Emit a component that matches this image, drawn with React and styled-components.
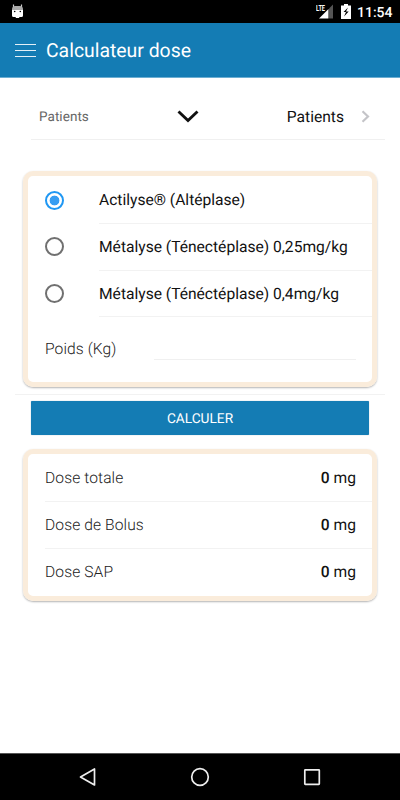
import styled, { createGlobalStyle } from "styled-components";
import { useState } from "react";

const GlobalStyle = createGlobalStyle`
  * {
    box-sizing: border-box;
  }
  body {
    margin: 0;
    background-color: #fff;
    font-family: Roboto, "Noto Sans", sans-serif;
    text-rendering: geometricPrecision;
    color: #111;
  }
  button, input {
    font-family: inherit;
    text-rendering: inherit;
    border: none;
    padding: 0;
    background: none;
    outline: none;
  }
`;

const Screen = styled.div`
  width: 400px;
  height: 800px;
  display: flex;
  flex-direction: column;
  overflow: hidden;
`;
const StatusBar = styled.div`
  height: 23px;
  padding: 0 8px 0 11px;
  display: flex;
  align-items: center;
  background-color: #000;
  color: #fff;
  svg {
    display: block;
  }
`;
const StatusIcons = styled.div`
  margin-left: auto;
  display: flex;
  align-items: center;
  gap: 7px;
`;
const Clock = styled.span`
  width: 35px;
  margin-left: -1px;
  font-size: 14px;
  font-weight: 500;
  line-height: 21px;
  padding-top: 3px;
  white-space: nowrap;
`;
const Header = styled.header`
  height: 55px;
  padding-left: 15px;
  display: flex;
  align-items: center;
  background-color: #147cb4;
  border-bottom: 1px solid #6caed2;
  color: #fff;
`;
const MenuButton = styled.button`
  width: 21px;
  height: 13px;
  display: flex;
  flex-direction: column;
  justify-content: space-between;
  span {
    height: 1px;
    background-color: #e4f0f7;
  }
`;
const Title = styled.h1`
  margin: 2px 0 0 10px;
  font-size: 19.4px;
  font-weight: 400;
  line-height: 24px;
`;
const Content = styled.main`
  flex: 1;
  display: flex;
  flex-direction: column;
`;
const PatientRow = styled.div`
  height: 46px;
  margin: 16px 15px 31px 31px;
  padding: 0 15px 0 8px;
  display: flex;
  align-items: center;
  border-bottom: 1px solid #f0f0f0;
  svg {
    display: block;
  }
`;
const SmallLabel = styled.span`
  width: 138px;
  font-size: 13.5px;
  line-height: 16px;
  letter-spacing: 0.05px;
  color: #666;
`;
const PatientLink = styled.span`
  margin-left: auto;
  margin-right: 17px;
  font-size: 15.6px;
`;
const Card = styled.section`
  height: ${({ $height }) => $height}px;
  margin: 0 23px;
  border: 5px solid #faecdb;
  border-radius: 10px;
  box-shadow: 0 1px 2px rgba(0, 0, 0, 0.3);
  padding-left: 17px;
`;
const RadioRow = styled.label`
  height: ${({ $height }) => $height}px;
  display: flex;
  align-items: center;
  input {
    appearance: none;
    flex: none;
    width: 19px;
    height: 19px;
    margin: 0 35px 0 0;
    border: 2px solid #707070;
    border-radius: 50%;
  }
  &:not(:first-child) input {
    margin-bottom: 2px;
  }
  input:checked {
    border-color: #1f97f3;
    background: radial-gradient(circle, #379df2 4.6px, transparent 5.2px);
  }
`;
const RadioText = styled.span`
  flex: 1;
  height: 100%;
  display: flex;
  align-items: center;
  border-bottom: 1px solid #f2f2f2;
  font-size: 15.6px;
  line-height: 20px;
  white-space: nowrap;
`;
const WeightRow = styled.label`
  height: 43px;
  display: flex;
  align-items: flex-end;
  justify-content: space-between;
  padding-right: 16px;
`;
const Label = styled.span`
  font-size: 15.6px;
  font-weight: 300;
  letter-spacing: 0.1px;
  line-height: 22px;
  color: #222;
`;
const WeightInput = styled.input`
  width: 202px;
  height: 30px;
  border-bottom: 1px solid #f0f0f0;
  font-size: 15.6px;
`;
const Separator = styled.div`
  height: 1px;
  margin: 7px 15px 6px;
  background-color: #f2f2f2;
`;
const CalculateButton = styled.button`
  height: 34px;
  margin: 0 31px 14px;
  padding-top: 1px;
  border-radius: 1px;
  background-color: #147cb4;
  box-shadow: 0 0 1px rgba(0, 60, 110, 0.5);
  color: #fff;
  font-size: 13.7px;
`;
const DoseRow = styled.div`
  height: ${({ $height }) => $height}px;
  padding: 1px 16px 0 0;
  display: flex;
  align-items: center;
  justify-content: space-between;
  border-bottom: 1px solid #f2f2f2;
  &:nth-child(2) {
    padding-top: 0;
  }
  &:last-child {
    border-bottom: none;
  }
`;
const Dose = styled.span`
  font-size: 15.6px;
  line-height: 22px;
  b {
    font-weight: 500;
  }
`;
const NavBar = styled.nav`
  height: 47px;
  display: flex;
  align-items: center;
  justify-content: space-between;
  padding: 0 78px;
  border-top: 1px solid #555;
  background-color: #000;
  svg {
    display: block;
  }
`;

const treatments = [
  { name: "Actilyse® (Altéplase)", height: 48 },
  { name: "Métalyse (Ténectéplase) 0,25mg/kg", height: 47 },
  { name: "Métalyse (Ténéctéplase) 0,4mg/kg", height: 46 },
];
const doses = [
  { name: "Dose totale", height: 48 },
  { name: "Dose de Bolus", height: 47 },
  { name: "Dose SAP", height: 45 },
];

export default function App() {
  const [selected, setSelected] = useState(0);
  const [weight, setWeight] = useState("");

  return (
    <Screen>
      <GlobalStyle />
      <StatusBar>
        <svg width="13" height="15" viewBox="0 0 13 15">
          <path d="M2.500 .5v3M10.500 .5v3" stroke="#ccc" strokeWidth="1.200" />
          <path d="M1 5.500Q1 2 4 2h5q3 0 3 3.500z" fill="#aaa" />
          <path d="M1 5.500h11v6q0 1.500-1.500 1.500H8.500l-.5 1H5l-.5-1h-2Q1 13 1 11.500z" fill="#fff" />
          <circle cx="3.700" cy="7.500" r=".8" />
          <circle cx="9.300" cy="7.500" r=".8" />
        </svg>
        <StatusIcons>
          <svg width="18" height="15" viewBox="0 0 18 15">
            <path d="M13 4.500l4-4V14.500h-4z" fill="#555" />
            <path d="M3 14.500L12.500 5v9.500z" fill="#fff" />
            <text x="0" y="7" fill="#fff" fontSize="8.500" fontWeight="700" textLength="9" lengthAdjust="spacingAndGlyphs">
              LTE
            </text>
          </svg>
          <svg width="10" height="15" viewBox="0 0 10 15">
            <path d="M3 0h4v1.500h3V15H0V1.500h3z" fill="#fff" />
            <path d="M7 3.500L2.500 8H5l-2 4.500L7.700 7.500H5z" fill="#000" />
          </svg>
          <Clock>11:54</Clock>
        </StatusIcons>
      </StatusBar>
      <Header>
        <MenuButton aria-label="Menu">
          <span />
          <span />
          <span />
        </MenuButton>
        <Title>Calculateur dose</Title>
      </Header>
      <Content>
        <PatientRow>
          <SmallLabel>Patients</SmallLabel>
          <svg width="22" height="13" viewBox="0 0 22 13">
            <path d="M1.500 1.500L11 10.500 20.500 1.500" fill="none" stroke="#111" strokeWidth="2.900" />
          </svg>
          <PatientLink>Patients</PatientLink>
          <svg width="9" height="13" viewBox="0 0 9 13">
            <path d="M1.500 1.200L7 6.500 1.500 11.800" fill="none" stroke="#c4c4c8" strokeWidth="2.200" />
          </svg>
        </PatientRow>
        <Card $height={216}>
          {treatments.map((item, index) => (
            <RadioRow key={item.name} $height={item.height}>
              <input
                type="radio"
                name="treatment"
                checked={selected === index}
                onChange={() => setSelected(index)}
              />
              <RadioText>{item.name}</RadioText>
            </RadioRow>
          ))}
          <WeightRow>
            <Label>Poids (Kg)</Label>
            <WeightInput
              value={weight}
              onChange={(e) => setWeight(e.target.value)}
            />
          </WeightRow>
        </Card>
        <Separator />
        <CalculateButton>CALCULER</CalculateButton>
        <Card $height={152}>
          {doses.map((dose) => (
            <DoseRow key={dose.name} $height={dose.height}>
              <Label>{dose.name}</Label>
              <Dose>
                <b>0</b> mg
              </Dose>
            </DoseRow>
          ))}
        </Card>
      </Content>
      <NavBar>
        <svg width="20" height="20" viewBox="0 0 20 20">
          <path d="M16.500 2v16L2.500 10z" fill="none" stroke="#eee" strokeWidth="1.700" strokeLinejoin="round" />
        </svg>
        <svg width="20" height="20" viewBox="0 0 20 20">
          <circle cx="10" cy="10" r="8.300" fill="none" stroke="#eee" strokeWidth="1.700" />
        </svg>
        <svg width="20" height="20" viewBox="0 0 20 20">
          <rect x="2.800" y="2.800" width="14.500" height="14.500" rx=".5" fill="none" stroke="#eee" strokeWidth="1.700" />
        </svg>
      </NavBar>
    </Screen>
  );
}
